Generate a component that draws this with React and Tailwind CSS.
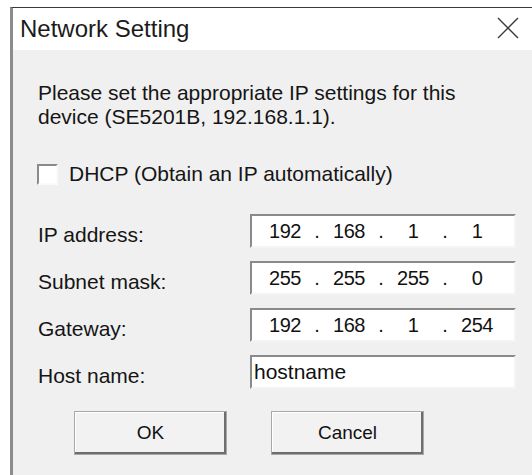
import React from 'react';

const FONT = { fontFamily: '"Liberation Sans", Arial, sans-serif' };

// Sunken white field, the classic Win32 edit look
function Field({ children }) {
  return (
    <div className="w-[266px] h-[34px] bg-white border-2 border-t-[#8a8a8a] border-l-[#8a8a8a] border-r-[#f4f4f4] border-b-[#f4f4f4] flex items-center text-[20px] text-[#111]">
      {children}
    </div>
  );
}

function IpField({ value }) {
  const parts = value.split('.');
  return (
    <Field>
      <div className="flex items-center pl-[9px]">
        {parts.map((p, i) => (
          <React.Fragment key={i}>
            {i > 0 && <span className="w-[16px] text-center">.</span>}
            <span className="w-[48px] text-center tracking-[-0.5px]">{p}</span>
          </React.Fragment>
        ))}
      </div>
    </Field>
  );
}

function Row({ label, children }) {
  return (
    <div className="flex items-center h-[34px]">
      <span className="w-[212px] pt-[8px] text-[21px] text-[#151515]">{label}</span>
      {children}
    </div>
  );
}

function Button({ children }) {
  return (
    <button className="w-[153px] h-[44px] bg-[#f2f2f2] border border-[#a8a8a8] shadow-[inset_-2px_-2px_0_#6e6e6e,inset_1px_1px_0_#ffffff] text-[19px] text-[#111]">
      {children}
    </button>
  );
}

export default function App() {
  return (
    <div className="w-[532px] h-[475px] bg-white pt-[7px] pl-[10px] overflow-hidden" style={FONT}>
      <div className="h-full flex flex-col border-t border-t-[#3a3a3a] border-l-[3px] border-l-[#8c8c8c]">
        {/* Title bar */}
        <div className="h-[42px] bg-white flex items-center justify-between pl-[7px] pr-[13px]">
          <span className="text-[24px] text-[#1b1b1b]">Network Setting</span>
          <svg width="22" height="22" viewBox="0 0 22 22" className="mt-[-2px]">
            <path d="M1 1 L21 21 M21 1 L1 21" stroke="#3a3a3a" strokeWidth="1.4" fill="none" />
          </svg>
        </div>

        {/* Dialog body */}
        <div className="flex-1 bg-[#f0f0f0] pl-[25px] pr-[16px] pt-[31px] flex flex-col">
          <p className="text-[21px] leading-[24px] text-[#151515]">
            Please set the appropriate IP settings for this
            <br />
            device (SE5201B, 192.168.1.1).
          </p>

          <label className="mt-[34px] flex items-center h-[22px]">
            <span className="w-[21px] h-[21px] bg-white border-2 border-t-[#8a8a8a] border-l-[#8a8a8a] border-r-[#fafafa] border-b-[#fafafa] ml-[-1px]" />
            <span className="ml-[11px] text-[21px] text-[#151515]">DHCP (Obtain an IP automatically)</span>
          </label>

          <div className="mt-[29px] flex flex-col gap-[13px]">
            <Row label="IP address:">
              <IpField value="192.168.1.1" />
            </Row>
            <Row label="Subnet mask:">
              <IpField value="255.255.255.0" />
            </Row>
            <Row label="Gateway:">
              <IpField value="192.168.1.254" />
            </Row>
            <Row label="Host name:">
              <Field>
                <span className="pl-[2px] text-[21px]">hostname</span>
              </Field>
            </Row>
          </div>

          <div className="mt-[22px] ml-[36px] flex gap-[44px]">
            <Button>OK</Button>
            <Button>Cancel</Button>
          </div>
        </div>
      </div>
    </div>
  );
}
